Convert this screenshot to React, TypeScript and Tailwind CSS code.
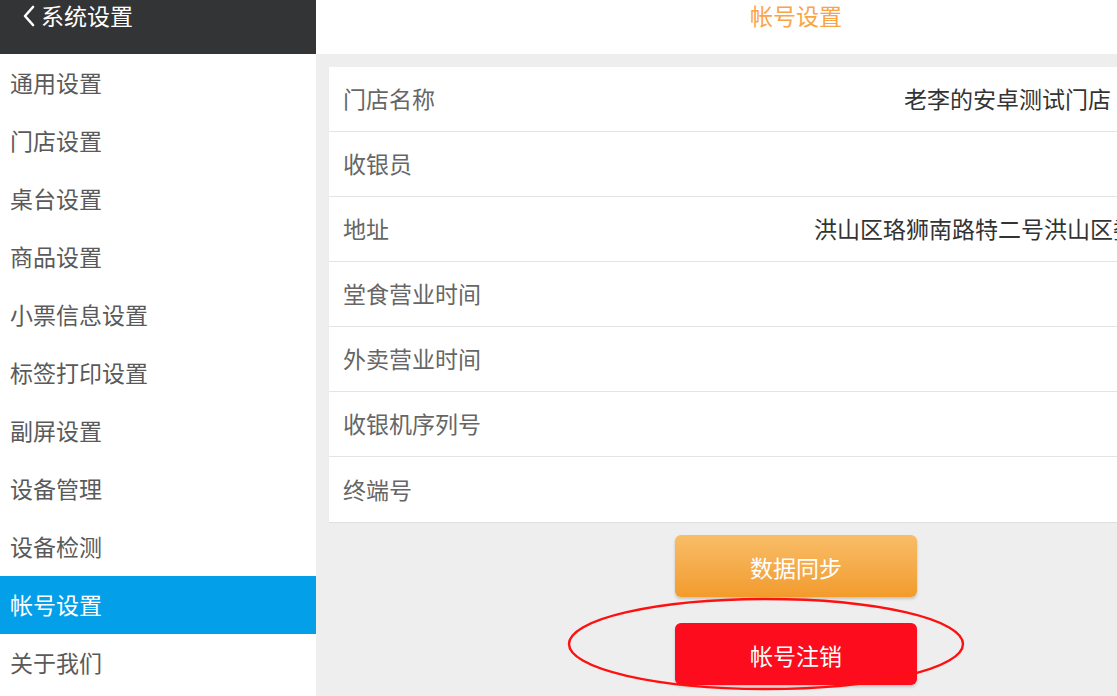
import React from "react";

const menu = [
  "通用设置",
  "门店设置",
  "桌台设置",
  "商品设置",
  "小票信息设置",
  "标签打印设置",
  "副屏设置",
  "设备管理",
  "设备检测",
  "帐号设置",
  "关于我们",
];

const rows: { label: string; value?: string }[] = [
  { label: "门店名称", value: "老李的安卓测试门店" },
  { label: "收银员" },
  { label: "地址", value: "洪山区珞狮南路特二号洪山区委员会大楼" },
  { label: "堂食营业时间" },
  { label: "外卖营业时间" },
  { label: "收银机序列号" },
  { label: "终端号" },
];

const font = { fontFamily: '"Noto Sans CJK SC", "Noto Sans", sans-serif' };

export default function App() {
  return (
    <div
      className="relative w-[1117px] h-[696px] overflow-hidden bg-[#eeeeee] flex"
      style={font}
    >
      {/* Sidebar */}
      <div className="w-[316px] shrink-0 flex flex-col bg-white">
        <div className="h-[54px] bg-[#333436] flex items-start pl-[22px]">
          <div className="flex items-center h-[31px] text-white text-[23px] leading-none">
            <svg width="14" height="22" viewBox="0 0 14 22" className="mr-[5px]">
              <path d="M11 2 L3 11 L11 20" fill="none" stroke="white" strokeWidth="2.6" strokeLinecap="round" strokeLinejoin="round" />
            </svg>
            <span>系统设置</span>
          </div>
        </div>
        {menu.map((m) => {
          const active = m === "帐号设置";
          return (
            <div
              key={m}
              className={
                "h-[58px] shrink-0 flex items-center pl-[10px] pb-[1px] text-[23px] " +
                (active ? "bg-[#03a0e9] text-white" : "bg-white text-[#5a5a5a]")
              }
            >
              {m}
            </div>
          );
        })}
      </div>

      {/* Right panel */}
      <div className="w-[960px] shrink-0 flex flex-col">
        <div className="h-[54px] bg-white flex justify-center">
          <span className="text-[#f9a546] text-[23px] leading-[30px]">帐号设置</span>
        </div>
        <div className="mt-[13px] mx-[13px] bg-white flex flex-col shadow-[0_1px_1px_rgba(0,0,0,0.06)]">
          {rows.map((r, i) => (
            <div
              key={r.label}
              className={
                "h-[65px] flex items-center pl-[14px] pb-[1px] " +
                (i < rows.length - 1 ? "border-b border-[#e4e4e4]" : "")
              }
            >
              <div className="w-[471px] shrink-0 text-[23px] text-[#666666]">{r.label}</div>
              <div className="w-[297px] shrink-0 text-right whitespace-nowrap text-[23px] text-[#333333]">
                {r.value ?? ""}
              </div>
            </div>
          ))}
        </div>
        <div className="flex flex-col items-center mt-[13px] gap-[26px]">
          <button className="w-[242px] h-[62px] pt-[3px] rounded-[6px] bg-gradient-to-b from-[#f8bd66] to-[#f29b2a] text-white text-[23px] shadow-[0_2px_3px_rgba(0,0,0,0.18)]">
            数据同步
          </button>
          <button className="w-[242px] h-[62px] pt-[3px] rounded-[6px] bg-[#fc0c1c] text-white text-[23px] shadow-[0_2px_3px_rgba(0,0,0,0.18)]">
            帐号注销
          </button>
        </div>
      </div>

      {/* Red annotation ellipse */}
      <svg
        className="absolute left-[566px] top-[596px] pointer-events-none"
        width="400"
        height="96"
        viewBox="0 0 400 96"
      >
        <ellipse cx="200" cy="48" rx="197" ry="45" fill="none" stroke="#ff1010" strokeWidth="2.4" />
      </svg>
    </div>
  );
}
